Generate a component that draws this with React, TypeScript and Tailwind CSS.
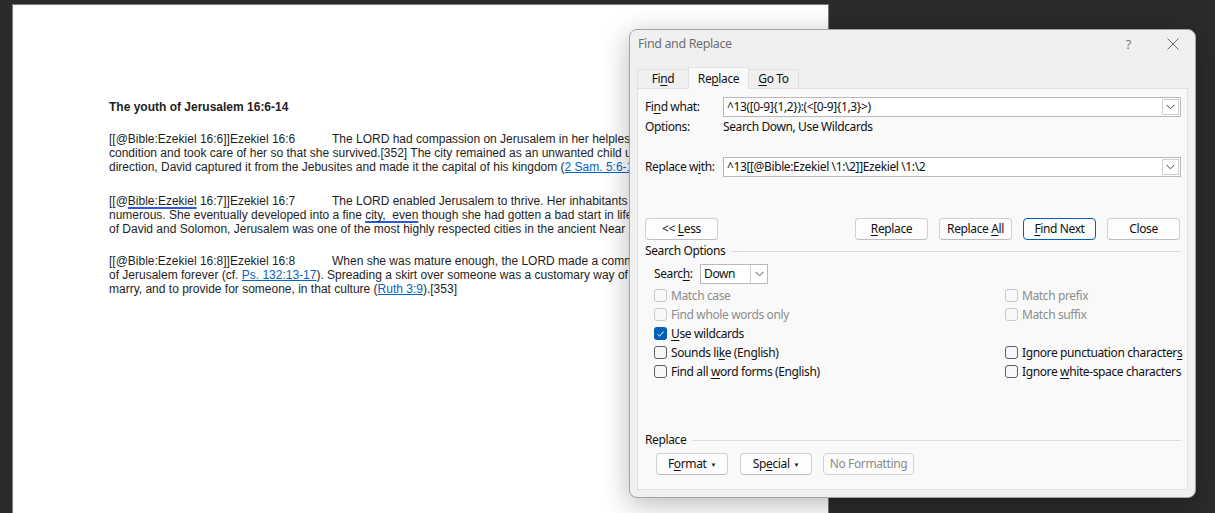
import React from "react";

const K = ({ children }: { children: React.ReactNode }) => (
  <span className="underline underline-offset-[2px] decoration-[1px]">{children}</span>
);

const Chevron = () => (
  <svg width="9" height="6" viewBox="0 0 9 6" className="block">
    <path d="M0.5 0.8 L4.5 4.8 L8.5 0.8" fill="none" stroke="#4a4a4a" strokeWidth="1" />
  </svg>
);

const Combo = ({ value }: { value: string }) => (
  <div className="flex-1 h-[20px] flex bg-white border border-[#b9b9b9]">
    <div className="flex-1 pl-[3px] leading-[18px] text-[#111] whitespace-nowrap overflow-hidden">{value}</div>
    <div className="w-[17px] my-[1px] mr-[1px] border border-[#cfcfcf] flex items-center justify-center">
      <Chevron />
    </div>
  </div>
);

const Btn = ({
  children,
  w,
  primary,
  disabled,
}: {
  children: React.ReactNode;
  w: string;
  primary?: boolean;
  disabled?: boolean;
}) => (
  <div
    className={[
      "h-[22px] rounded-[4px] flex items-center justify-center leading-none",
      w,
      primary
        ? "border border-[#005fb8] bg-[#fdfdfd] text-[#111]"
        : disabled
        ? "border border-[#d4d4d4] bg-[#fbfbfb] text-[#8c8c8c]"
        : "border border-[#d0d0d0] border-b-[#bdbdbd] bg-[#fdfdfd] text-[#111]",
    ].join(" ")}
  >
    <span className="whitespace-pre">{children}</span>
  </div>
);

const Check = ({
  label,
  checked,
  disabled,
}: {
  label: React.ReactNode;
  checked?: boolean;
  disabled?: boolean;
}) => (
  <div className="h-[19px] flex items-center gap-[4px] whitespace-nowrap">
    {checked ? (
      <div className="w-[13px] h-[13px] rounded-[3px] bg-[#005fb8] flex items-center justify-center">
        <svg width="9" height="8" viewBox="0 0 9 8">
          <path d="M1.5 4.2 L3.6 6.2 L7.6 1.6" fill="none" stroke="white" strokeWidth="1" />
        </svg>
      </div>
    ) : (
      <div
        className={
          "w-[13px] h-[13px] rounded-[3px] " +
          (disabled ? "border border-[#c9c9c9] bg-[#f9f9f9]" : "border border-[#5e5e5e] bg-[#f7f7f7]")
        }
      />
    )}
    <span className={"whitespace-pre " + (disabled ? "text-[#8d8d8d]" : "text-[#111]")}>{label}</span>
  </div>
);

const Link = ({ children }: { children: React.ReactNode }) => (
  <span className="text-[#0563c1] underline underline-offset-[1px]">{children}</span>
);

const Blue = ({ children }: { children: React.ReactNode }) => (
  <span className="underline decoration-[2px] decoration-[#2a5ae0] underline-offset-[2px]">{children}</span>
);

const Para = ({
  prefix,
  lines,
  className,
}: {
  prefix: React.ReactNode;
  lines: React.ReactNode[];
  className?: string;
}) => (
  <div className={className}>
    <div className="whitespace-pre h-[14px]">
      <span className="inline-block w-[223px]">{prefix}</span>
      {lines[0]}
    </div>
    {lines.slice(1).map((l, i) => (
      <div key={i} className="whitespace-pre h-[14px]">
        {l}
      </div>
    ))}
  </div>
);

export default function App() {
  return (
    <div className="relative w-[1215px] h-[513px] bg-[#2b2b2b] overflow-hidden">
      {/* Document page */}
      <div className="ml-[12px] pt-[4px]">
        <div className="w-[817px] h-[509px] bg-white border-t border-l border-r border-[#7c7c7c] overflow-hidden pl-[96px] pt-[95px] font-['Liberation_Sans',Arial,sans-serif] text-[12px] leading-[14px] text-[#1e1e1e]">
          <div className="font-bold h-[14px]">The youth of Jerusalem 16:6-14</div>
          <Para
            className="mt-[18px]"
            prefix="[[@Bible:Ezekiel 16:6]]Ezekiel 16:6"
            lines={[
              "The LORD had compassion on Jerusalem in her helpless, dying",
              "condition and took care of her so that she survived.[352] The city remained as an unwanted child until, under the LORD's",
              <>
                direction, David captured it from the Jebusites and made it the capital of his kingdom (<Link>2 Sam. 5:6-10</Link>).
              </>,
            ]}
          />
          <Para
            className="mt-[20px]"
            prefix={
              <>
                [[@<Blue>Bible:Ezekiel</Blue> 16:7]]Ezekiel 16:7
              </>
            }
            lines={[
              "The LORD enabled Jerusalem to thrive. Her inhabitants became",
              <>
                numerous. She eventually developed into a fine <Blue>city,  even</Blue> though she had gotten a bad start in life. By the time
              </>,
              "of David and Solomon, Jerusalem was one of the most highly respected cities in the ancient Near East.",
            ]}
          />
          <Para
            className="mt-[18px]"
            prefix="[[@Bible:Ezekiel 16:8]]Ezekiel 16:8"
            lines={[
              "When she was mature enough, the LORD made a commitment to",
              <>
                of Jerusalem forever (cf. <Link>Ps. 132:13-17</Link>). Spreading a skirt over someone was a customary way of
              </>,
              <>
                marry, and to provide for someone, in that culture (<Link>Ruth 3:9</Link>).[353]
              </>,
            ]}
          />
        </div>
      </div>

      {/* Find and Replace dialog (window over the document) */}
      <div className="absolute left-[629px] top-[29px] w-[567px] h-[469px] rounded-[8px] border border-[#a3a3a3] bg-[#f0f0f0] shadow-[0_6px_28px_rgba(0,0,0,0.28)] font-['Noto_Sans',sans-serif] text-[12px] tracking-[-0.38px] text-[#111] flex flex-col">
        {/* title bar */}
        <div className="h-[37px] flex items-start pt-[6px] pl-[8px] pr-[16px]">
          <div className="flex-1 leading-[16px] text-[#6f6f6f] text-[12.5px]">Find and Replace</div>
          <div className="leading-[16px] text-[#7a7a7a] text-[13px] mr-[36px]">?</div>
          <svg width="12" height="12" viewBox="0 0 12 12" className="mt-[2px]">
            <path d="M0.5 0.5 L11.5 11.5 M11.5 0.5 L0.5 11.5" stroke="#6a6a6a" strokeWidth="1" />
          </svg>
        </div>

        {/* tabs */}
        <div className="relative z-10 ml-[7px] h-[21px] flex items-end">
          <div className="w-[51px] h-[19px] border-t border-l border-[#e1e1e1] bg-[#f0f0f0] flex items-center justify-center leading-none">
            <span className="whitespace-pre">
              Fi<K>n</K>d
            </span>
          </div>
          <div className="w-[61px] h-[22px] -mb-px border-t border-l border-r border-[#e1e1e1] bg-[#f9f9f9] flex items-center justify-center leading-none">
            <span className="whitespace-pre">
              Re<K>p</K>lace
            </span>
          </div>
          <div className="w-[50px] h-[19px] border-t border-r border-[#e1e1e1] bg-[#f0f0f0] flex items-center justify-center leading-none">
            <span className="whitespace-pre">
              <K>G</K>o To
            </span>
          </div>
        </div>

        {/* panel */}
        <div className="mx-[7px] h-[402px] border border-[#e1e1e1] bg-[#f9f9f9] flex flex-col pl-[7px] pr-[6px]">
          <div className="mt-[8px] flex items-center">
            <div className="w-[78px] whitespace-pre">
              Fi<K>n</K>d what:
            </div>
            <Combo value="^13([0-9]{1,2}):(<[0-9]{1,3}>)" />
          </div>
          <div className="mt-[2px] h-[16px] flex items-center">
            <div className="w-[78px]">Options:</div>
            <div>Search Down, Use Wildcards</div>
          </div>
          <div className="mt-[22px] flex items-center">
            <div className="w-[78px] whitespace-pre">
              Replace w<K>i</K>th:
            </div>
            <Combo value="^13[[@Bible:Ezekiel \1:\2]]Ezekiel \1:\2" />
          </div>

          <div className="mt-[41px] flex items-center pr-[1px]">
            <Btn w="w-[73px]">
              &lt;&lt; <K>L</K>ess
            </Btn>
            <div className="flex-1" />
            <div className="flex gap-[11px]">
              <Btn w="w-[73px]">
                <K>R</K>eplace
              </Btn>
              <Btn w="w-[73px]">
                Replace <K>A</K>ll
              </Btn>
              <Btn w="w-[73px]" primary>
                <K>F</K>ind Next
              </Btn>
              <Btn w="w-[73px]">Close</Btn>
            </div>
          </div>

          <div className="mt-[3px] h-[16px] flex items-center gap-[6px]">
            <span>Search Options</span>
            <div className="flex-1 h-px bg-[#dcdcdc]" />
          </div>

          <div className="mt-[5px] pl-[9px] flex items-center">
            <div className="w-[46px] whitespace-pre">
              Searc<K>h</K>:
            </div>
            <div className="w-[68px] h-[20px] bg-white border border-[#b9b9b9] flex">
              <div className="flex-1 pl-[3px] leading-[18px]">Down</div>
              <div className="w-[17px] border-l border-[#cfcfcf] flex items-center justify-center">
                <Chevron />
              </div>
            </div>
          </div>

          <div className="mt-[2px] pl-[9px] grid grid-cols-[351px_1fr]">
            <Check label="Match case" disabled />
            <Check label="Match prefix" disabled />
            <Check label="Find whole words only" disabled />
            <Check label="Match suffix" disabled />
            <Check
              checked
              label={
                <>
                  <K>U</K>se wildcards
                </>
              }
            />
            <div />
            <Check
              label={
                <>
                  Sounds li<K>k</K>e (English)
                </>
              }
            />
            <Check
              label={
                <>
                  Ignore punctuation character<K>s</K>
                </>
              }
            />
            <Check
              label={
                <>
                  Find all <K>w</K>ord forms (English)
                </>
              }
            />
            <Check
              label={
                <>
                  Ignore <K>w</K>hite-space characters
                </>
              }
            />
          </div>

          <div className="mt-[51px] h-[16px] flex items-center gap-[6px]">
            <span>Replace</span>
            <div className="flex-1 h-px bg-[#dcdcdc]" />
          </div>

          <div className="mt-[5px] pl-[11px] flex items-center">
            <Btn w="w-[72px]">
              F<K>o</K>rmat<span className="text-[6px] ml-[4px] relative -top-px">▼</span>
            </Btn>
            <div className="w-[12px]" />
            <Btn w="w-[72px]">
              Sp<K>e</K>cial<span className="text-[6px] ml-[4px] relative -top-px">▼</span>
            </Btn>
            <div className="w-[11px]" />
            <Btn w="w-[91px]" disabled>
              No Formatting
            </Btn>
          </div>
        </div>
      </div>
    </div>
  );
}
